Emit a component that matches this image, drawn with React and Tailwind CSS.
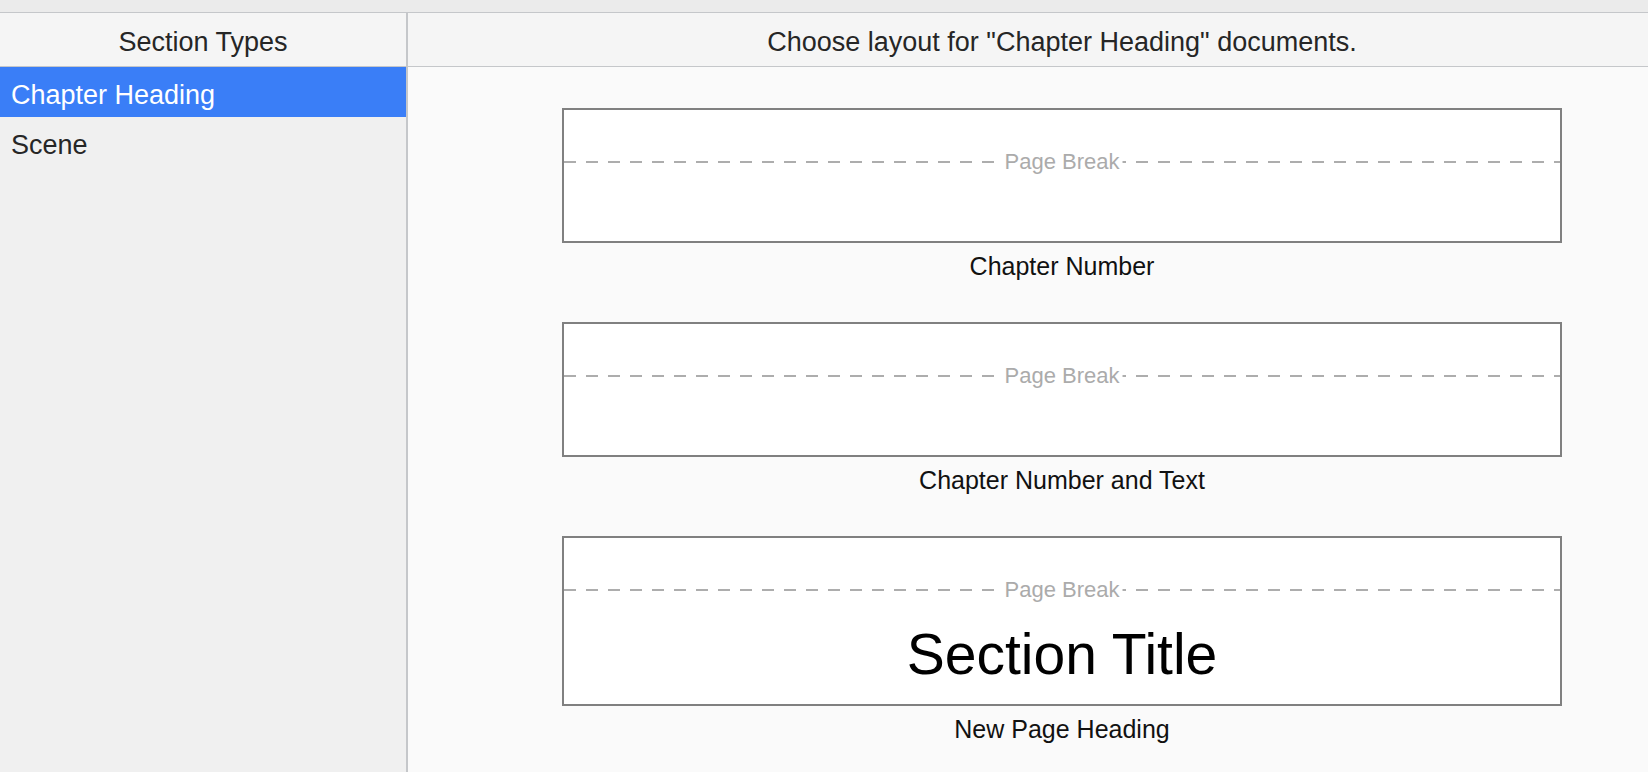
import React from 'react';

const sectionTypes = ['Chapter Heading', 'Scene'];

const layouts = [
  { name: 'Chapter Number', tall: false },
  { name: 'Chapter Number and Text', tall: false },
  { name: 'New Page Heading', tall: true, title: 'Section Title' },
];

const PageBreak = () => (
  <div className="relative mt-[51px] h-[2px] w-full bg-[repeating-linear-gradient(to_right,#adadad_0px,#adadad_12px,transparent_12px,transparent_22px)]">
    <span className="absolute left-1/2 top-1/2 -translate-x-1/2 -translate-y-1/2 bg-white px-[3px] text-[22px] leading-none text-[#ababab] whitespace-nowrap">
      Page Break
    </span>
  </div>
);

const LayoutOption = ({ layout, first }) => (
  <div className={first ? 'flex flex-col items-center' : 'mt-[41px] flex flex-col items-center'}>
    <div
      className={
        layout.tall
          ? 'flex h-[170px] w-[1000px] flex-col border-2 border-[#808080] bg-white'
          : 'flex h-[135px] w-[1000px] flex-col border-2 border-[#808080] bg-white'
      }
    >
      <PageBreak />
      {layout.title && (
        <div className="mt-[35px] text-center text-[57px] leading-none text-black">
          {layout.title}
        </div>
      )}
    </div>
    <div className="mt-[8px] h-[30px] text-[25px] leading-[30px] text-[#111]">{layout.name}</div>
  </div>
);

const App = () => {
  const selected = 'Chapter Heading';

  return (
    <div className="flex h-[772px] w-[1648px] flex-col overflow-hidden bg-[#fafafa] font-['Liberation_Sans',Arial,sans-serif] text-[#262626]">
      <div className="h-[13px] border-b border-[#c5c7ca] bg-[#ebebeb]" />

      <div className="flex h-[54px] border-b border-[#c5c7ca] bg-[#f5f5f5]">
        <div className="flex w-[408px] items-center justify-center border-r-2 border-[#c5c7ca] pt-[5px] text-[27px]">
          Section Types
        </div>
        <div className="flex flex-1 items-center justify-center pl-[68px] pt-[5px] text-[27px]">
          Choose layout for "Chapter Heading" documents.
        </div>
      </div>

      <div className="flex flex-1">
        <div className="w-[408px] border-r-2 border-[#c5c7ca] bg-[#f0f0f0]">
          {sectionTypes.map((t) => (
            <div
              key={t}
              className={
                t === selected
                  ? 'flex h-[50px] items-center bg-[#3a7ef7] px-[11px] pt-[6px] text-[27px] text-white'
                  : 'flex h-[50px] items-center px-[11px] pt-[6px] text-[27px] text-[#262626]'
              }
            >
              {t}
            </div>
          ))}
        </div>

        <div className="flex flex-1 flex-col items-center pl-[68px] pt-[41px]">
          {layouts.map((l, i) => (
            <LayoutOption key={l.name} layout={l} first={i === 0} />
          ))}
        </div>
      </div>
    </div>
  );
};

export default App;
